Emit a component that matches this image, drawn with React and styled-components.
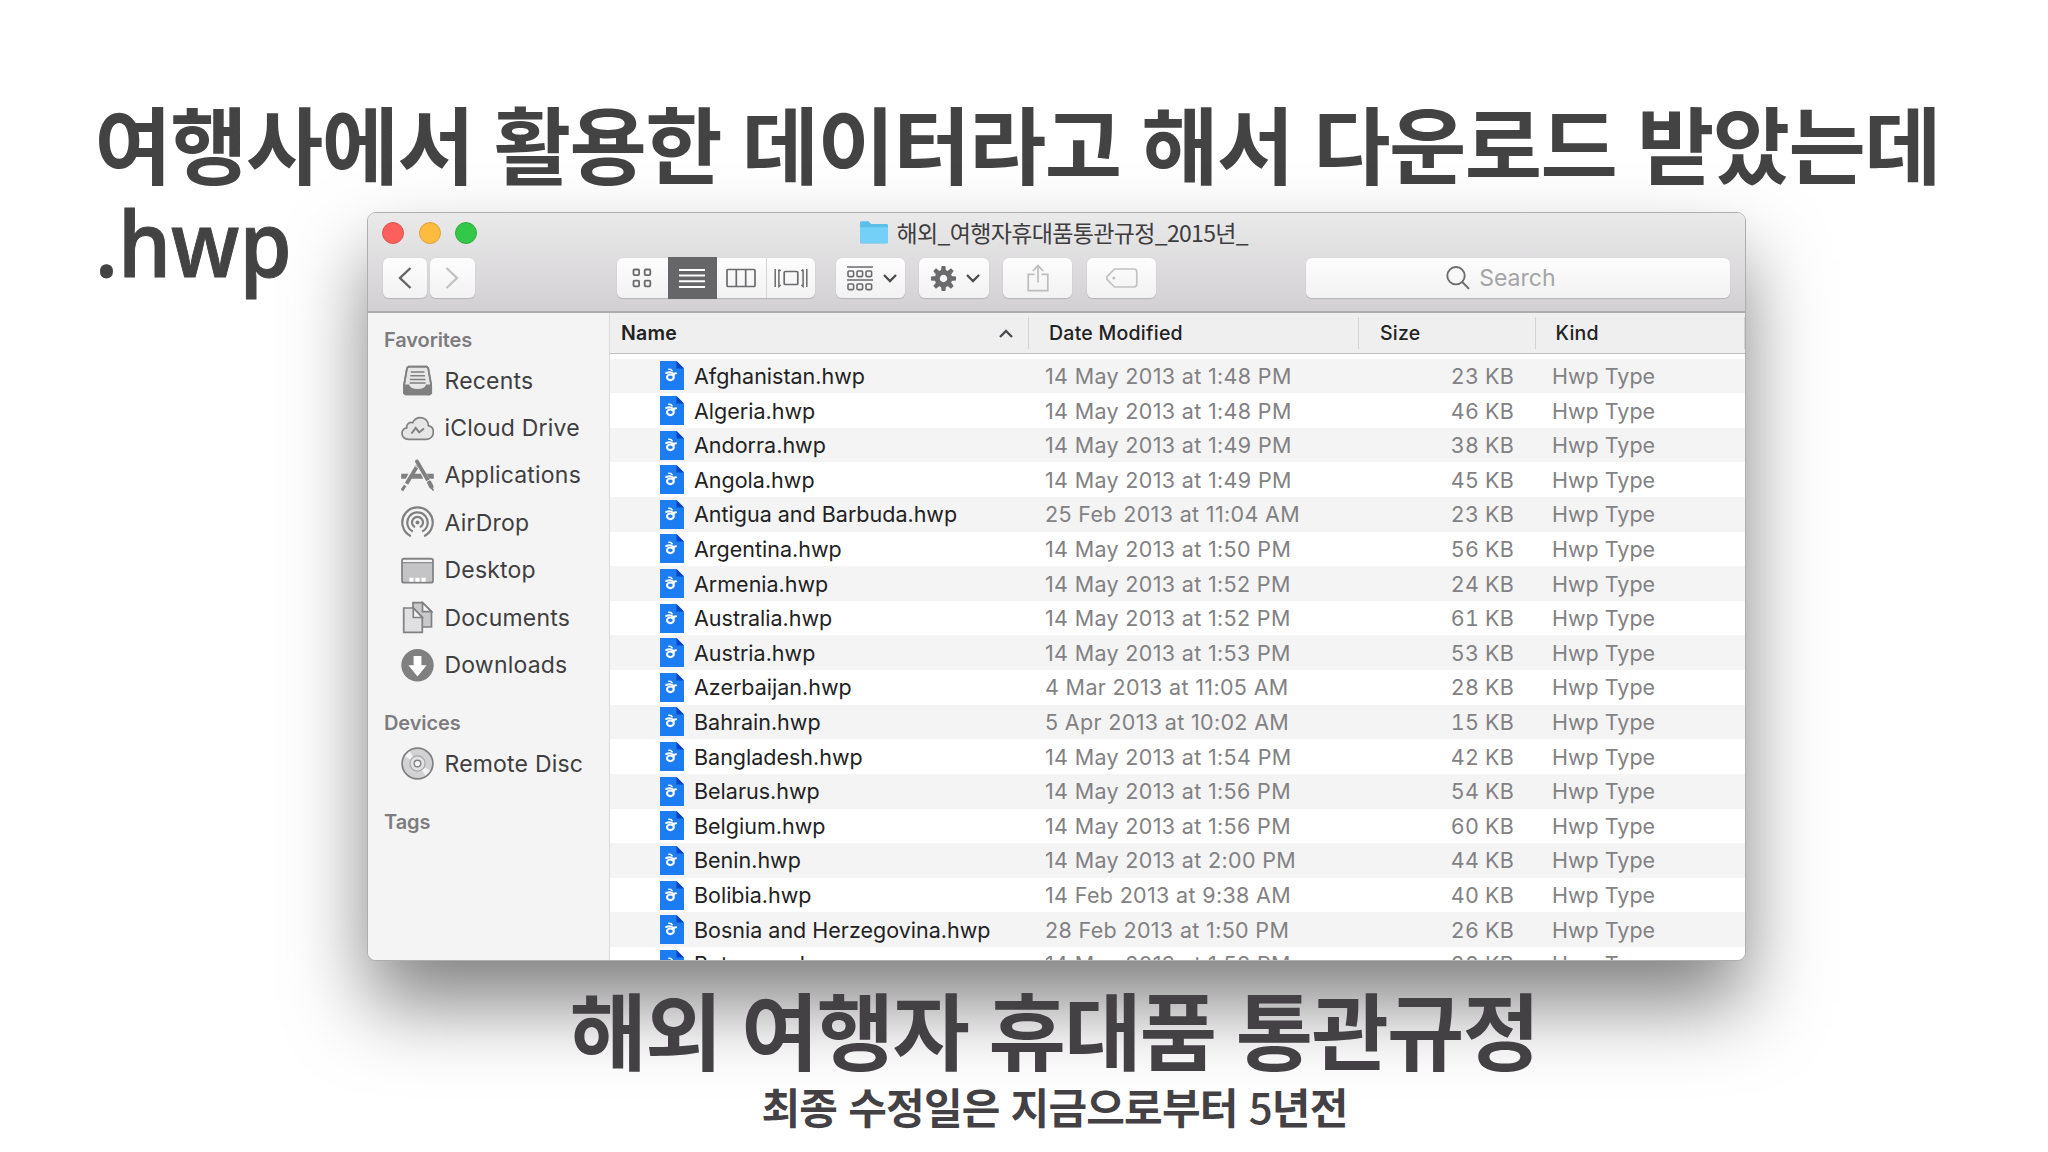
import React from "react";
import styled, {createGlobalStyle} from "styled-components";

const files = [
    ["Afghanistan.hwp", "14 May 2013 at 1:48 PM", "23 KB"],
    ["Algeria.hwp", "14 May 2013 at 1:48 PM", "46 KB"],
    ["Andorra.hwp", "14 May 2013 at 1:49 PM", "38 KB"],
    ["Angola.hwp", "14 May 2013 at 1:49 PM", "45 KB"],
    ["Antigua and Barbuda.hwp", "25 Feb 2013 at 11:04 AM", "23 KB"],
    ["Argentina.hwp", "14 May 2013 at 1:50 PM", "56 KB"],
    ["Armenia.hwp", "14 May 2013 at 1:52 PM", "24 KB"],
    ["Australia.hwp", "14 May 2013 at 1:52 PM", "61 KB"],
    ["Austria.hwp", "14 May 2013 at 1:53 PM", "53 KB"],
    ["Azerbaijan.hwp", "4 Mar 2013 at 11:05 AM", "28 KB"],
    ["Bahrain.hwp", "5 Apr 2013 at 10:02 AM", "15 KB"],
    ["Bangladesh.hwp", "14 May 2013 at 1:54 PM", "42 KB"],
    ["Belarus.hwp", "14 May 2013 at 1:56 PM", "54 KB"],
    ["Belgium.hwp", "14 May 2013 at 1:56 PM", "60 KB"],
    ["Benin.hwp", "14 May 2013 at 2:00 PM", "44 KB"],
    ["Bolibia.hwp", "14 Feb 2013 at 9:38 AM", "40 KB"],
    ["Bosnia and Herzegovina.hwp", "28 Feb 2013 at 1:50 PM", "26 KB"],
    ["Botswana.hwp", "14 May 2013 at 1:58 PM", "28 KB"],
];

const favorites = [
    ["Recents", () => (
        <Glyph>
            <path d="M7.5 2.7h18.2l1.5 1.4 3 16.9v8.2l-1.6 1.3H4.6L3 29.2V21L6 4.1z" fill="#e6e6e7" />
            <path d="M3 20.5h5c1 3 4 4.6 8.6 4.6s7.6-1.6 8.6-4.6h5v8.7l-1.6 1.3H4.6L3 29.2z" fill="#808080" stroke="none" />
            <path d="M7.5 2.7h18.2l1.5 1.4 3 16.9v8.2l-1.6 1.3H4.6L3 29.2V21L6 4.1z" />
            <path d="M9.8 8h13.6M9.3 11.7h14.6M8.8 15.4h15.6M8.6 19h16" strokeWidth="1.5" />
        </Glyph>
    )],
    ["iCloud Drive", () => (
        <Glyph>
            <path d="M7.5 27.3C3.5 27.3 1 24.8 1 21.6c0-3 2-5.2 4.7-5.7-.5-3.4 2.6-6.2 6-5.2C13 7.5 15.9 5.6 19.4 5.6c4.6 0 8 3.5 8 8.1 3 .6 5 3 5 6.3 0 4.2-3 7.3-7 7.3z" fill="#e6e6e7" />
            <path d="M10.5 21.5l4.2-5.7 3.5 4.6 4.8-4" strokeWidth="2" />
        </Glyph>
    )],
    ["Applications", () => (
        <Glyph>
            <path d="M.2 14.8h7.3l-2.7 5H.2zM13.3 14.8h6.6l2.4 5H10.4zM25.6 14.8h7.2v5h-4.5z" fill="#808080" stroke="none" />
            <path d="M16 2.5l12 20.5" strokeWidth="3.8" strokeLinecap="round" />
            <path d="M16.3 7L5.5 24.8" strokeWidth="3.8" />
            <path d="M28.5 24l1.8 3.5" strokeWidth="4.5" strokeLinecap="round" />
            <path d="M29.5 27.5l3 4" strokeWidth="1.8" />
            <path d="M4.2 26.5L1 31.3" strokeWidth="3" />
            <path d="M12.3 5.8l5 3M25 23l5-3" stroke="#f5f4f6" strokeWidth="1" />
        </Glyph>
    )],
    ["AirDrop", () => (
        <Glyph>
            <circle cx="16.5" cy="16.5" r="2" fill="#808080" stroke="none" />
            <path d="M14 21.3a5.5 5.5 0 1 1 5 0M11.8 25.6a10.2 10.2 0 1 1 9.4 0M9.8 30.2a15.2 15.2 0 1 1 13.4 0" strokeWidth="2.2" />
        </Glyph>
    )],
    ["Desktop", () => (
        <Glyph>
            <rect x="1" y="4.7" width="31" height="24" rx="2" fill="#c4c4c6" />
            <path d="M2 6h29v2H2z" fill="#f5f4f6" stroke="none" />
            <path d="M1 8.7h31" strokeWidth="1" />
            <path d="M8.3 23.8h4.2v4H8.3zM14.4 23.8h4.2v4h-4.2zM20.5 23.8h4.2v4h-4.2z" fill="#fff" stroke="none" />
        </Glyph>
    )],
    ["Documents", () => (
        <Glyph>
            <path d="M12 1.7h9.5l9 9V26H12z" fill="#c9c9cb" />
            <path d="M21.5 1.7v9h9z" fill="#f5f4f6" />
            <path d="M2.7 7h9.6l9 9.5v14.8H2.7z" fill="#e0e0e2" />
            <path d="M12.3 7v9.5h9z" fill="#f5f4f6" />
        </Glyph>
    )],
    ["Downloads", () => (
        <Glyph>
            <circle cx="16.5" cy="16.3" r="16.2" fill="#808080" stroke="none" />
            <path d="M12.6 7h7.8v9.2h5.2L16.5 27.4 7.4 16.2h5.2z" fill="#fff" stroke="none" />
        </Glyph>
    )],
];

const Disc = () => (
    <Glyph>
        <circle cx="16.5" cy="16.5" r="15.4" fill="#d2d2d4" />
        <path d="M16.5 16.5L3.8 9.5l4.7-5.3zM16.5 16.5l12.7 7-4.7 5.3z" fill="#f3f3f4" stroke="none" />
        <circle cx="16.5" cy="16.5" r="7.6" fill="#e2e2e4" stroke="#a5a5a5" strokeWidth="1.2" />
        <circle cx="16.5" cy="16.5" r="3.3" fill="#f8f8f8" strokeWidth="1.4" />
    </Glyph>
);

const Glyph = ({children}) => (
    <svg width="33" height="33" viewBox="0 0 33 33" fill="none" stroke="#808080" strokeWidth="1.7">
        {children}
    </svg>
);

const Chevron = ({up}) => (
    <svg width="14" height="9" viewBox="0 0 14 9" fill="none" stroke="#4b4a4c" strokeWidth="2.3">
        <path d={up ? "M1 8l6-6 6 6" : "M1 1l6 6 6-6"} />
    </svg>
);

const HwpIcon = () => (
    <svg width="24" height="29" viewBox="0 0 24 29">
        <path d="M0 0h16.5L24 7.5V29H0z" fill="#1c7df2" />
        <path d="M16.5 0L24 7.5h-7.5z" fill="#0b46c2" />
        <g fill="none" stroke="#fff" strokeLinecap="round">
            <path d="M8.8 8.2c1.4-.2 2.7.4 3.4 1.6" strokeWidth="1.5" />
            <path d="M6.2 12c3.2-1.4 6.6-1 7.6 2.4M13 13l3-.8" strokeWidth="2" />
            <ellipse cx="10.4" cy="16.3" rx="3.4" ry="2.8" strokeWidth="2.1" />
        </g>
    </svg>
);

const teeth = [0, 45, 90, 135, 180, 225, 270, 315];

const App = () => {
    return (
        <Slide>
            <Global />
            <Heading>
                여행사에서 활용한 데이터라고 해서 다운로드 받았는데
                <br />
                <Latin>.hwp</Latin>
            </Heading>
            <Window>
                <Toolbar>
                    <TitleRow>
                        <Lights>
                            <Light color="#fc605c" edge="#e0524e" />
                            <Light color="#fdbc40" edge="#dfa136" />
                            <Light color="#34c84a" edge="#2aac3c" />
                        </Lights>
                        <Title>
                            <svg width="28" height="23" viewBox="0 0 28 23">
                                <path d="M0 2C0 .8.6.3 1.6.3h6.8L11.2 3h15.2c1 0 1.6.6 1.6 1.6V21c0 1-.6 1.6-1.6 1.6H1.6C.6 22.6 0 22 0 21z" fill="#5cbfea" />
                                <path d="M0 6.2h28V21c0 .6-.6 1-1.6 1H1.6C.6 22 0 21.6 0 21z" fill="#74d0f7" />
                            </svg>
                            <TitleText>해외_여행자휴대품통관규정_2015년_</TitleText>
                        </Title>
                    </TitleRow>
                    <Tools>
                        <Nav>
                            <Button w={44.5}>
                                <svg width="14" height="22" viewBox="0 0 14 22" fill="none" stroke="#636264" strokeWidth="2.4">
                                    <path d="M12.5 1L2 11l10.5 10" />
                                </svg>
                            </Button>
                            <Button w={44.5}>
                                <svg width="14" height="22" viewBox="0 0 14 22" fill="none" stroke="#c2c1c3" strokeWidth="2.4">
                                    <path d="M1.5 1L12 11 1.5 21" />
                                </svg>
                            </Button>
                        </Nav>
                        <Views>
                            <Segment w={50.5}>
                                <svg width="20" height="20" viewBox="0 0 20 20" fill="none" stroke="#6b6a6c" strokeWidth="1.8">
                                    <rect x="1.5" y="1.5" width="5.6" height="5.6" rx="1" />
                                    <rect x="12.7" y="1.5" width="5.6" height="5.6" rx="1" />
                                    <rect x="1.5" y="12.7" width="5.6" height="5.6" rx="1" />
                                    <rect x="12.7" y="12.7" width="5.6" height="5.6" rx="1" />
                                </svg>
                            </Segment>
                            <Segment w={49.5} active>
                                <svg width="26" height="19" viewBox="0 0 26 19" stroke="#fff" strokeWidth="2">
                                    <path d="M0 1h26M0 6.6h26M0 12.3h26M0 18h26" />
                                </svg>
                            </Segment>
                            <Segment w={48.5}>
                                <svg width="30" height="20" viewBox="0 0 30 20" fill="none" stroke="#6b6a6c" strokeWidth="1.7">
                                    <rect x="1" y="1.5" width="28" height="17" rx="1" />
                                    <path d="M10.3 1.5v17M19.7 1.5v17" />
                                </svg>
                            </Segment>
                            <Segment w={49.5} line>
                                <svg width="34" height="20" viewBox="0 0 34 20" fill="none" stroke="#6b6a6c" strokeWidth="1.5">
                                    <path d="M1.2 1v18M4.9 1.5v17l1.8-1.5M4.9 1.5L6.7 3M32.8 1v18M29.1 1.5v17L27.3 17M29.1 1.5L27.3 3" />
                                    <rect x="10.2" y="3.5" width="13.6" height="13" rx="1" strokeWidth="1.7" />
                                </svg>
                            </Segment>
                        </Views>
                        <Button w={69.3} gap={10} push={3}>
                            <svg width="26" height="25" viewBox="0 0 26 25" fill="none" stroke="#6b6a6c" strokeWidth="1.6">
                                <path d="M0 1h26M0 14h26" />
                                {[1, 10, 19].map((x) => (
                                    <React.Fragment key={x}>
                                        <rect x={x} y="5" width="5.6" height="5.6" rx="1" />
                                        <rect x={x} y="18" width="5.6" height="5.6" rx="1" />
                                    </React.Fragment>
                                ))}
                            </svg>
                            <Chevron />
                        </Button>
                        <Button w={69.3} gap={10} push={4}>
                            <svg width="25" height="25" viewBox="-12.5 -12.5 25 25">
                                {teeth.map((a) => (
                                    <path key={a} d="M-2.6-7h5.2l-.7-5.5h-3.8z" fill="#6b6a6c" transform={`rotate(${a})`} />
                                ))}
                                <circle r="6.2" fill="none" stroke="#6b6a6c" strokeWidth="5" />
                            </svg>
                            <Chevron />
                        </Button>
                        <Button w={69.3}>
                            <svg width="22" height="28" viewBox="0 0 22 28" fill="none" stroke="#bdbcbe" strokeWidth="1.7">
                                <path d="M7.5 10.3H1.2v16.3h19.6V10.3h-6.3M11 18.5V2M5.8 7L11 1.6 16.2 7" />
                            </svg>
                        </Button>
                        <Button w={69.3}>
                            <svg width="32" height="20" viewBox="0 0 32 20" fill="none" stroke="#c2c1c3" strokeWidth="1.7">
                                <path d="M8.5 1h19.3c1.8 0 3 1.2 3 3v12c0 1.8-1.2 3-3 3H8.5L1 11.3V8.7z" />
                                <circle cx="7.8" cy="10" r="1.6" fill="#c2c1c3" stroke="none" />
                            </svg>
                        </Button>
                        <Search>
                            <svg width="24" height="24" viewBox="0 0 24 24" fill="none" stroke="#6b6a6c" strokeWidth="1.9">
                                <circle cx="10" cy="9.7" r="8.7" />
                                <path d="M16.2 16l6.8 6.8" />
                            </svg>
                            Search
                        </Search>
                    </Tools>
                </Toolbar>
                <Body>
                    <Sidebar>
                        <Section>Favorites</Section>
                        {favorites.map(([name, Icon]) => (
                            <Place key={name}>
                                <Icon />
                                {name}
                            </Place>
                        ))}
                        <Section>Devices</Section>
                        <Place>
                            <Disc />
                            Remote Disc
                        </Place>
                        <Section>Tags</Section>
                    </Sidebar>
                    <List>
                        <Header>
                            <HeadCell strong>
                                Name
                                <Chevron up />
                            </HeadCell>
                            <HeadCell pad={20}>Date Modified</HeadCell>
                            <HeadCell pad={21}>Size</HeadCell>
                            <HeadCell pad={19.5}>Kind</HeadCell>
                        </Header>
                        {files.map(([name, date, size]) => (
                            <Row key={name}>
                                <Name>
                                    <HwpIcon />
                                    {name}
                                </Name>
                                <Cell spacing={0.34}>{date}</Cell>
                                <Size>{size}</Size>
                                <Cell>Hwp Type</Cell>
                            </Row>
                        ))}
                    </List>
                </Body>
            </Window>
            <Caption>해외 여행자 휴대품 통관규정</Caption>
            <SubCaption>
                최종 수정일은 지금으로부터 <Thin>5</Thin>년전
            </SubCaption>
        </Slide>
    );
};

const Global = createGlobalStyle`
    * { box-sizing: border-box; }
    body { margin: 0; background: #fff; }
    svg { flex: none; display: block; }
`
const Slide = styled.div`
    display: flex;
    flex-direction: column;
    width: 2048px;
    height: 1152px;
    padding-top: 92px;
    overflow: hidden;
    background: #fff;
    font-family: Inter, "Noto Sans CJK KR", sans-serif;
`
const Heading = styled.h1`
    margin: 0 0 0 94.5px;
    height: 196px;
    font-family: "Noto Sans CJK KR", sans-serif;
    font-size: 84px;
    font-weight: 700;
    line-height: 99px;
    letter-spacing: -1.55px;
    word-spacing: 3.2px;
    white-space: nowrap;
    color: #434343;
`
const Latin = styled.span`
    display: inline-block;
    font-family: "Open Sans", sans-serif;
    font-size: 91px;
    font-weight: 600;
    line-height: 1;
    letter-spacing: 0;
    -webkit-text-stroke: 1px #434343;
    transform: scaleX(0.92);
    transform-origin: left;
`
const Window = styled.div`
    display: flex;
    flex-direction: column;
    flex: none;
    width: 1378.5px;
    height: 748.5px;
    margin: -76px 0 0 367px;
    border: 1px solid #aeadaf;
    border-radius: 9px;
    overflow: hidden;
    background: #fff;
    box-shadow: 0 44px 80px -2px rgba(0, 0, 0, 0.5);
`
const Toolbar = styled.div`
    height: 100px;
    flex: none;
    border-bottom: 2px solid #acabad;
    background: linear-gradient(#ebeaeb, #d2d0d2);
`
const TitleRow = styled.div`
    display: grid;
    grid-template-columns: 1fr auto 1fr;
    align-items: center;
    height: 45px;
    padding: 0 18px 6px 14px;
`
const Lights = styled.div`
    display: flex;
    gap: 14.5px;
`
const Light = styled.span`
    width: 22px;
    height: 22px;
    border-radius: 50%;
    border: 1px solid ${(p) => p.edge};
    background: ${(p) => p.color};
`
const Title = styled.div`
    display: flex;
    align-items: center;
    gap: 8px;
    height: 30px;
    font-family: "Noto Sans CJK KR", sans-serif;
    font-size: 23px;
    letter-spacing: -0.66px;
    color: #3d3c3e;
`
const TitleText = styled.span`
    padding-bottom: 2px;
`
const Tools = styled.div`
    display: flex;
    padding: 0 14.5px;
    gap: 14.5px;
`
const Nav = styled.div`
    display: flex;
    gap: 3px;
    margin-right: 128px;
`
const Button = styled.div`
    display: flex;
    align-items: center;
    justify-content: center;
    gap: ${(p) => p.gap || 0}px;
    width: ${(p) => p.w}px;
    height: 40px;
    padding-left: ${(p) => p.push || 0}px;
    border-radius: 6px;
    background: linear-gradient(#fefdfe, #f3f2f3);
    box-shadow: 0 1px 1px #b4b3b5, 0 0 1px #c4c3c5;
`
const Views = styled.div`
    display: flex;
    margin-right: 6px;
    border-radius: 6px;
    background: linear-gradient(#fefdfe, #f3f2f3);
    box-shadow: 0 1px 1px #b4b3b5, 0 0 1px #c4c3c5;
`
const Segment = styled.div`
    display: flex;
    align-items: center;
    justify-content: center;
    width: ${(p) => p.w}px;
    height: ${(p) => (p.active ? 42 : 40)}px;
    margin: ${(p) => (p.active ? "-1px 0" : 0)};
    background: ${(p) => (p.active ? "#666567" : "none")};
    border-left: ${(p) => (p.line ? "1px solid #d5d4d6" : "none")};
`
const Search = styled(Button)`
    flex: 1;
    margin-left: 135px;
    padding-right: 34px;
    gap: 9px;
    font-size: 23px;
    color: #a5a4a6;
`
const Body = styled.div`
    display: flex;
    flex: 1;
    min-height: 0;
`
const Sidebar = styled.div`
    width: 242px;
    flex: none;
    padding: 10px 0 0 16px;
    border-right: 1px solid #d9d8da;
    background: #f5f4f5;
`
const Section = styled.div`
    height: 34px;
    line-height: 34px;
    font-size: 20px;
    font-weight: 600;
    letter-spacing: -0.1px;
    color: #7d7c7e;

    &:not(:first-child) {
        margin-top: 17.4px;
    }
`
const Place = styled.div`
    display: flex;
    align-items: center;
    gap: 11px;
    height: 47.4px;
    padding-left: 16.5px;
    font-size: 23px;
    letter-spacing: 0.2px;
    color: #3f3e40;
    white-space: nowrap;
`
const List = styled.div`
    flex: 1;
    overflow: hidden;
    background: #fff;
`
const columns = "419px 330px 177px 1fr";
const Header = styled.div`
    display: grid;
    grid-template-columns: ${columns};
    height: 41px;
    margin-bottom: 4.6px;
    padding: 4px 0 4px;
    background: #f0eff0;
    border-bottom: 1px solid #bfbec0;
`
const HeadCell = styled.div`
    display: flex;
    align-items: center;
    justify-content: space-between;
    padding: 0 15px 0 ${(p) => p.pad || 11}px;
    border-right: 1px solid #d3d2d4;
    font-size: 19.5px;
    font-weight: ${(p) => (p.strong ? 600 : 500)};
    letter-spacing: ${(p) => (p.strong ? 0.2 : 0.25)}px;
    color: #222;
`
const Row = styled.div`
    display: grid;
    grid-template-columns: ${columns};
    align-items: center;
    height: 34.62px;
    font-size: 21.5px;
    white-space: nowrap;
    color: #828183;

    &:nth-child(even) {
        background: #f4f4f5;
    }
`
const Name = styled.div`
    display: flex;
    align-items: center;
    gap: 10px;
    padding-left: 50px;
    color: #222;
`
const Cell = styled.div`
    padding-left: 16px;
    letter-spacing: ${(p) => p.spacing || 0}px;
`
const Size = styled.div`
    padding-right: 22px;
    text-align: right;
    font-variant-numeric: tabular-nums;
    letter-spacing: 0.2px;
`
const Caption = styled.h2`
    margin: 18px 0 0 60px;
    font-family: "Noto Sans CJK KR", sans-serif;
    font-size: 84px;
    font-weight: 700;
    line-height: 98px;
    letter-spacing: -1.6px;
    word-spacing: 2.8px;
    text-align: center;
    color: #434144;
`
const SubCaption = styled.p`
    margin: 4px 0 0 61px;
    font-family: "Noto Sans CJK KR", sans-serif;
    font-size: 42px;
    font-weight: 700;
    line-height: 50px;
    letter-spacing: -0.8px;
    word-spacing: 2.3px;
    text-align: center;
    color: #434144;
`
const Thin = styled.span`
    font-weight: 500;
`
export default App;
